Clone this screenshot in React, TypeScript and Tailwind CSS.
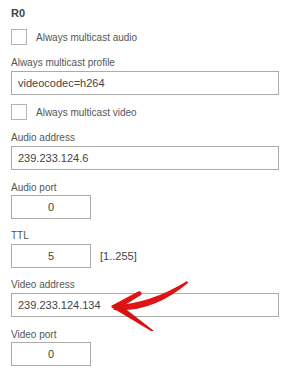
import React from 'react'

const font = { fontFamily: '"Liberation Sans", Arial, sans-serif' }

const Label = ({ text, mt }: { text: string; mt: string }) => (
  <div className={`${mt} h-[12px] leading-[12px] text-[10px] text-[#555]`}>{text}</div>
)

const Check = ({ text }: { text: string }) => (
  <div className="mt-[9px] flex h-[16px] items-center gap-[9px]">
    <div className="h-[16px] w-[16px] border border-[#b4b4b4] bg-white" />
    <span className="text-[10px] text-[#555]">{text}</span>
  </div>
)

const Wide = ({ value }: { value: string }) => (
  <div className="mt-[2px] flex h-[24px] w-[268px] items-center border border-[#ababab] bg-white pl-[6px] text-[11px] text-[#444]">
    {value}
  </div>
)

const Small = ({ value, mt }: { value: string; mt: string }) => (
  <div className={`${mt} flex h-[24px] w-[80px] items-center justify-center border border-[#ababab] bg-white text-[11px] text-[#444]`}>
    {value}
  </div>
)

const App = () => {
  return (
    <div className="relative h-[379px] w-[288px] overflow-hidden bg-white" style={font}>
      <div className="relative flex flex-col pl-[11px]">
        <div className="mt-[6px] h-[14px] leading-[14px] text-[11px] font-bold text-[#444]">R0</div>
        <Check text="Always multicast audio" />
        <Label text="Always multicast profile" mt="mt-[12px]" />
        <Wide value="videocodec=h264" />
        <Check text="Always multicast video" />
        <Label text="Audio address" mt="mt-[12px]" />
        <Wide value="239.233.124.6" />
        <Label text="Audio port" mt="mt-[12px]" />
        <Small value="0" mt="mt-[1px]" />
        <Label text="TTL" mt="mt-[11px]" />
        <div className="mt-[2px] flex items-center gap-[9px]">
          <Small value="5" mt="mt-0" />
          <span className="text-[11px] text-[#444]">[1..255]</span>
        </div>
        <Label text="Video address" mt="mt-[11px]" />
        <Wide value="239.233.124.134" />
        <Label text="Video port" mt="mt-[12px]" />
        <Small value="0" mt="mt-[1px]" />
      </div>

      {/* red arrow */}
      <svg className="pointer-events-none absolute left-0 top-0" width="288" height="379" viewBox="0 0 288 379">
        <path d="M113 305 Q150 304 187 281 L188 283 Q152 313 114 310 Z" fill="#e01414" />
        <path d="M111 306 L139 291 Q143 292 141 295 L117 310 Z" fill="#e01414" />
        <path d="M111 307 L118 303 L154 331 L151 331 Z" fill="#d81010" />
      </svg>
    </div>
  )
}

export default App
